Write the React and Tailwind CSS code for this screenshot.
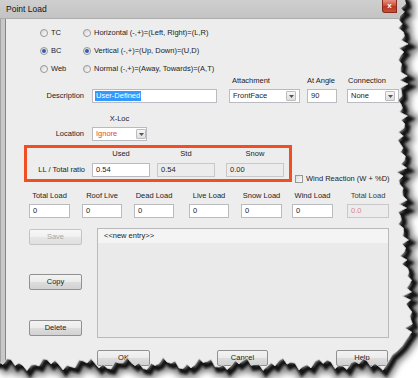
import React from "react";

const Radio = ({ checked, label }) => (
  <div className="flex items-center gap-[3px]">
    <span className="w-[8px] h-[8px] rounded-full border border-[#979898] bg-[linear-gradient(135deg,#d6d6d6,#fdfdfd)] flex items-center justify-center">
      {checked && <span className="w-[4px] h-[4px] rounded-full bg-[#2d5fae]" />}
    </span>
    <span className="whitespace-nowrap">{label}</span>
  </div>
);

const Field = ({ value, disabled, className = "", textClass = "" }) => (
  <div
    className={`h-[14px] border flex items-center pl-[3px] ${
      disabled ? "bg-[#ececec] border-[#c8c8c8]" : "bg-white border-[#b9bbc0]"
    } ${className}`}
  >
    <span className={textClass}>{value}</span>
  </div>
);

const Combo = ({ value, className = "", textClass = "", tight }) => (
  <div
    className={`h-[14px] bg-white border border-[#b9bbc0] flex items-center justify-between pl-[3px] ${
      tight ? "pr-[0px]" : "pr-[3px]"
    } ${className}`}
  >
    <span className={textClass}>{value}</span>
    <span className="w-[10px] h-[10px] border border-[#bdbdbd] rounded-[1px] bg-[linear-gradient(#f6f6f6,#dedede)] flex items-center justify-center">
      <svg width="5" height="3" viewBox="0 0 5 3">
        <path d="M0 0h5L2.5 3z" fill="#555" />
      </svg>
    </span>
  </div>
);

const Btn = ({ label, disabled, className = "" }) => (
  <div
    className={`h-[16px] rounded-[2px] border flex items-center justify-center ${
      disabled
        ? "border-[#c2c5c8] bg-[linear-gradient(#f8f8f8,#f0f0f0_50%,#e6e6e6_50%,#e0e0e0)] text-[#a8a8a8]"
        : "border-[#919191] bg-[linear-gradient(#f3f3f3,#ebebeb_50%,#dddddd_50%,#d2d2d2)] text-[#1c1c1c]"
    } ${className}`}
  >
    {label}
  </div>
);

const loads = [
  { label: "Total Load", w: "w-[41px]", ml: "ml-0" },
  { label: "Roof Live", w: "w-[40px]", ml: "ml-[12px]" },
  { label: "Dead Load", w: "w-[40px]", ml: "ml-[12px]" },
  { label: "Live Load", w: "w-[40px]", ml: "ml-[15px]" },
  { label: "Snow Load", w: "w-[41px]", ml: "ml-[12px]" },
  { label: "Wind Load", w: "w-[41px]", ml: "ml-[10px]" },
];

// jagged paper edge for the screenshot cut-out
function tearEdge() {
  const n = (v, a, b, c) =>
    3.1 * Math.sin(v * a) + 2.2 * Math.sin(v * b + 1.3) + 1.5 * Math.sin(v * c + 0.4);
  const pts = [];
  for (let y = -4; y <= 334; y += 4) {
    let base = 402;
    if (y > 230) base = 402 + Math.min(1, (y - 230) / 60) * 7;
    pts.push([base + n(y, 0.61, 1.73, 3.9), y]);
  }
  pts.push([406, 340], [402, 346], [397, 351], [392, 355]);
  for (let x = 387; x >= -6; x -= 4) pts.push([x, 364 + n(x, 0.53, 1.41, 3.3)]);
  return pts;
}

const Tear = () => {
  const pts = tearEdge();
  const edge = pts.map((p) => p.join(",")).join(" ");
  const shifted = pts.map(([x, y]) => `${x + 3},${y + 3}`).join(" ");
  const poly = `${edge} -10,400 430,400 430,-10 ${pts[0][0]},-10`;
  return (
    <svg className="absolute inset-0 pointer-events-none" width="418" height="378">
      <defs>
        <clipPath id="outside">
          <polygon points={poly} />
        </clipPath>
        <filter id="b1" filterUnits="userSpaceOnUse" x="-20" y="-20" width="460" height="420">
          <feGaussianBlur stdDeviation="1.2" />
        </filter>
        <filter id="b2" filterUnits="userSpaceOnUse" x="-20" y="-20" width="460" height="420">
          <feGaussianBlur stdDeviation="3" />
        </filter>
      </defs>
      <polygon points={poly} fill="#fff" />
      <g clipPath="url(#outside)">
        <polyline points={shifted} fill="none" stroke="#000" strokeOpacity="0.5" strokeWidth="12" filter="url(#b2)" />
        <polyline points={shifted} fill="none" stroke="#111" strokeOpacity="0.95" strokeWidth="5" filter="url(#b1)" />
      </g>
      <polyline points={edge} fill="none" stroke="#d8d8d8" strokeWidth="0.8" />
    </svg>
  );
};

export default function App() {
  return (
    <div className="relative w-[418px] h-[378px] overflow-hidden bg-white font-['Liberation_Sans',Arial,sans-serif] text-[7.5px] leading-none text-[#1c1c1c]">
      <div className="w-[412px] h-[378px] flex flex-col">
        {/* title bar */}
        <div className="h-[19px] flex justify-between bg-[linear-gradient(#cfcfcf,#c3c3c3)] border-b border-[#adadad]">
          <span className="pl-[6px] self-center text-[8.5px] text-[#141414]">Point Load</span>
          <div className="w-[15px] h-[13px] mr-[15px] rounded-bl-[3px] border border-t-0 border-[#8a2a1c] bg-[linear-gradient(#e5917f,#cf4a35_50%,#b8321f_50%,#c7513a)] flex items-center justify-center text-white text-[8px] font-bold">
            x
          </div>
        </div>

        <div className="flex-1 flex">
          <div className="w-[6px] bg-[#c8c8c8] border-l border-[#a2a2a2] border-r border-r-[#858585]" />
          <div className="flex-1 bg-[#ededed] flex flex-col">
            {/* radios */}
            <div className="pt-[5px] flex flex-col">
              <div className="h-[18px] flex items-center">
                <div className="ml-[34px] w-[43px]"><Radio label="TC" /></div>
                <Radio label="Horizontal (-,+)=(Left, Right)=(L,R)" />
              </div>
              <div className="h-[18px] flex items-center">
                <div className="ml-[34px] w-[43px]"><Radio checked label="BC" /></div>
                <Radio checked label="Vertical (-,+)=(Up, Down)=(U,D)" />
              </div>
              <div className="h-[18px] flex items-center">
                <div className="ml-[34px] w-[43px]"><Radio label="Web" /></div>
                <Radio label="Normal (-,+)=(Away, Towards)=(A,T)" />
              </div>
            </div>

            {/* description row */}
            <div className="mt-[-2px] flex items-end">
              <div className="w-[78px] h-[14px] flex items-center justify-end">Description</div>
              <div className="ml-[8px] w-[125px] h-[14px] bg-white border border-[#b9bbc0] flex items-center pl-[2px]">
                <span className="bg-[#3399ff] text-white px-[1px] py-[1px]">User-Defined</span>
              </div>
              <div className="ml-[12px] w-[71px] flex flex-col">
                <div className="h-[10px] mb-[3px] pl-[3px] flex items-center">Attachment</div>
                <Combo value="FrontFace" />
              </div>
              <div className="ml-[7px] w-[30px] flex flex-col">
                <div className="h-[10px] mb-[3px] flex items-center whitespace-nowrap">At Angle</div>
                <Field value="90" />
              </div>
              <div className="ml-[10px] w-[52px] flex flex-col">
                <div className="h-[10px] mb-[3px] pl-[1px] flex items-center">Connection</div>
                <Combo value="None" />
              </div>
            </div>

            {/* location */}
            <div className="mt-[11px] flex items-end">
              <div className="w-[78px] h-[14px] flex items-center justify-end">Location</div>
              <div className="ml-[8px] w-[55px] flex flex-col">
                <div className="h-[10px] mb-[3px] flex items-center justify-center">X-Loc</div>
                <Combo value="Ignore" tight textClass="text-[#e0463a]" />
              </div>
            </div>

            {/* ratio box */}
            <div className="mt-[4px] flex items-end">
              <div className="ml-[18px] w-[268px] h-[37px] border-[3px] border-[#f04e23] pt-[1px] flex flex-col">
                <div className="h-[10px] flex items-center">
                  <div className="w-[58px]" />
                  <div className="ml-[7px] w-[58px] text-center">Used</div>
                  <div className="ml-[7px] w-[58px] text-center">Std</div>
                  <div className="ml-[11px] w-[58px] text-center">Snow</div>
                </div>
                <div className="mt-[4px] flex items-center">
                  <div className="w-[58px] text-right">LL / Total ratio</div>
                  <Field value="0.54" className="ml-[7px] w-[58px]" />
                  <Field value="0.54" disabled className="ml-[7px] w-[58px]" />
                  <Field value="0.00" disabled className="ml-[11px] w-[58px]" />
                </div>
              </div>
              <div className="ml-[3px] mb-[-2px] h-[10px] flex items-center gap-[3px]">
                <span className="w-[8px] h-[8px] border border-[#979898] bg-[linear-gradient(135deg,#dcdcdc,#fbfbfb)]" />
                <span className="whitespace-nowrap">Wind Reaction (W + %D)</span>
              </div>
            </div>

            {/* loads */}
            <div className="mt-[9px] ml-[23px] flex">
              {loads.map((l) => (
                <div key={l.label} className={`${l.ml} ${l.w} flex flex-col items-center`}>
                  <div className="h-[10px] mb-[3px] flex items-center whitespace-nowrap">{l.label}</div>
                  <Field value="0" className="w-full" />
                </div>
              ))}
              <div className="ml-[14px] w-[42px] flex flex-col items-center">
                <div className="h-[10px] mb-[3px] flex items-center whitespace-nowrap text-[#3a3a3a]">Total Load</div>
                <Field value="0.0" disabled className="w-full" textClass="text-[#d88a8a]" />
              </div>
            </div>

            {/* entries */}
            <div className="mt-[10px] flex">
              <div className="ml-[23px] w-[53px] flex flex-col">
                <Btn label="Save" disabled className="mt-[1px]" />
                <Btn label="Copy" className="mt-[29px]" />
                <Btn label="Delete" className="mt-[30px]" />
              </div>
              <div className="ml-[15px] w-[292px] h-[110px] border border-[#bababa] bg-[#eaeaea] flex flex-col">
                <div className="h-[14px] bg-[#f4f4f4] flex items-center pl-[6px]">&lt;&lt;new entry&gt;&gt;</div>
              </div>
            </div>

            {/* dialog buttons */}
            <div className="mt-[12px] flex">
              <Btn label="OK" className="ml-[91px] w-[53px]" />
              <Btn label="Cancel" className="ml-[67px] w-[51px]" />
              <Btn label="Help" className="ml-[68px] w-[52px]" />
            </div>
          </div>
        </div>
      </div>
      <Tear />
    </div>
  );
}
